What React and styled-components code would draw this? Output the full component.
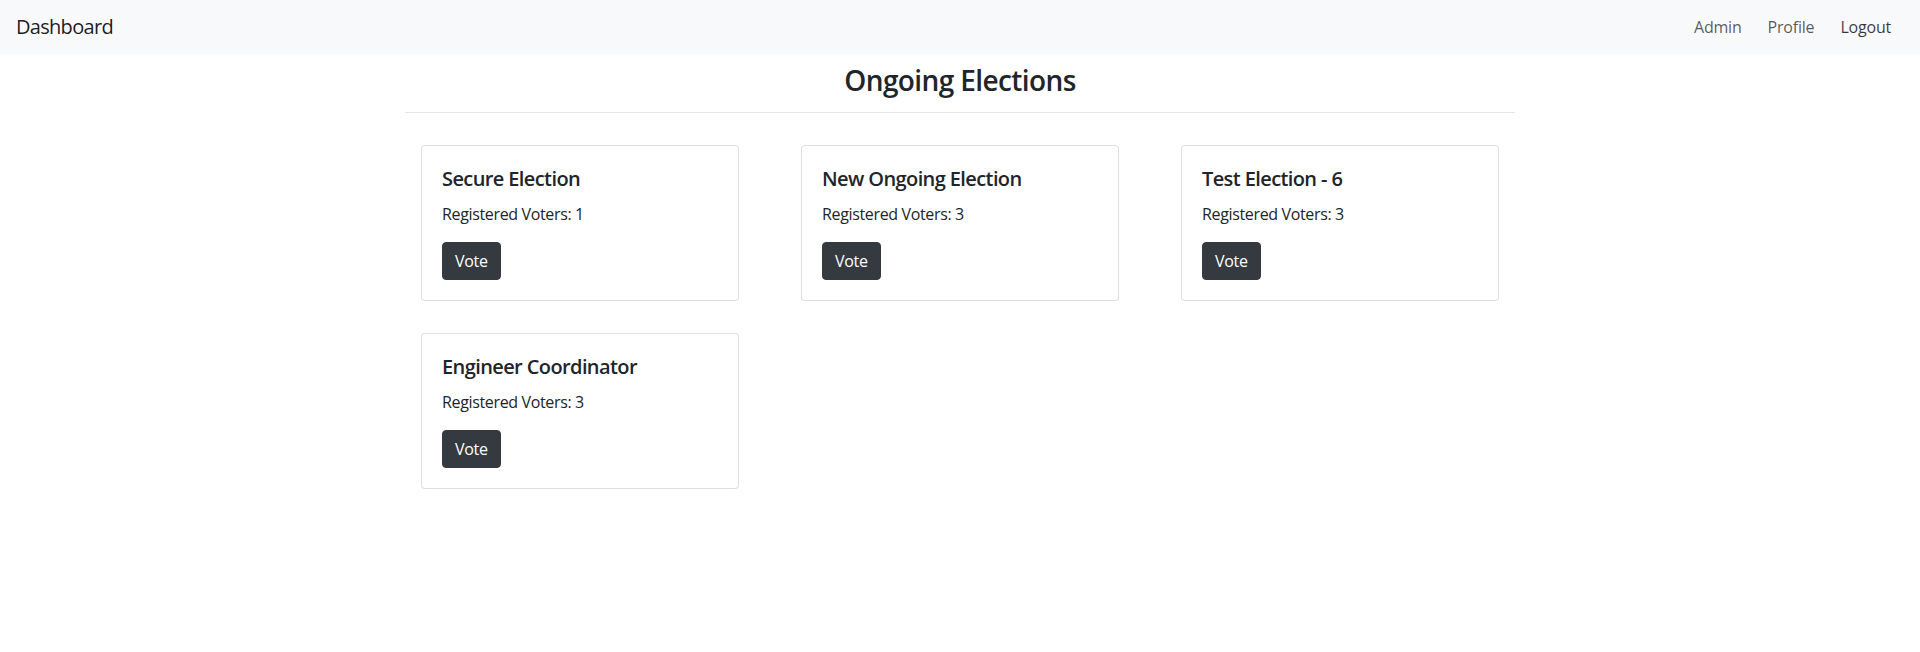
import React from "react";
import styled, { createGlobalStyle } from "styled-components";

const GlobalStyle = createGlobalStyle`
  * { box-sizing: border-box; }
  html, body { margin: 0; padding: 0; background: #fff; }
  body {
    font-family: "Open Sans", "Noto Sans", sans-serif;
    font-size: 16px;
    line-height: 1.5;
    color: #212529;
  }
`;

const Navbar = styled.nav`
  height: 54px;
  background: #f8f9fa;
  display: flex;
  align-items: center;
  justify-content: space-between;
  padding: 0 21px 0 16px;
`;

const Brand = styled.a`
  font-size: 20px;
  line-height: 30px;
  letter-spacing: -0.7px;
  color: rgba(0, 0, 0, 0.9);
  text-decoration: none;
`;

const NavList = styled.ul`
  display: flex;
  gap: 10px;
  list-style: none;
  margin: 0;
  padding: 0;
`;

const NavLink = styled.a`
  display: block;
  padding: 0 8px;
  font-size: 16px;
  line-height: 24px;
  letter-spacing: -0.2px;
  color: ${(p) => (p.$active ? "rgba(0,0,0,0.78)" : "rgba(0,0,0,0.66)")};
  text-decoration: none;
`;

const Container = styled.main`
  max-width: 1140px;
  margin: 0 auto;
  padding: 0 15px;
`;

const Title = styled.h2`
  margin: 9px 0 0;
  text-align: center;
  font-size: 28px;
  line-height: 34px;
  font-weight: 600;
  letter-spacing: -0.6px;
`;

const Divider = styled.hr`
  margin: 15px 0 16px;
  border: 0;
  border-top: 1px solid rgba(0, 0, 0, 0.1);
`;

const Grid = styled.div`
  display: grid;
  grid-template-columns: repeat(3, 1fr);
  margin: 0 -15px;
`;

const Col = styled.div`
  padding: 0 15px;
`;

const Card = styled.div`
  margin: 16px;
  border: 1px solid rgba(0, 0, 0, 0.125);
  border-radius: 4px;
  background: #fff;
  padding: 20px;
`;

const CardTitle = styled.h5`
  margin: 1px 0 11px;
  font-size: 20px;
  line-height: 24px;
  font-weight: 600;
  letter-spacing: -0.6px;
`;

const CardText = styled.p`
  margin: 0 0 16px;
  font-size: 16px;
  line-height: 24px;
  letter-spacing: -0.35px;
`;

const Button = styled.button`
  display: inline-block;
  font-family: inherit;
  font-size: 16px;
  line-height: 24px;
  letter-spacing: -0.3px;
  padding: 6px 12px;
  color: #fff;
  background: #343a40;
  border: 1px solid #343a40;
  border-radius: 4px;
  cursor: pointer;
`;

const elections = [
  { name: "Secure Election", voters: 1 },
  { name: "New Ongoing Election", voters: 3 },
  { name: "Test Election - 6", voters: 3 },
  { name: "Engineer Coordinator", voters: 3 },
];

export default function App() {
  return (
    <>
      <GlobalStyle />
      <Navbar>
        <Brand href="#">Dashboard</Brand>
        <NavList>
          <li><NavLink href="#">Admin</NavLink></li>
          <li><NavLink href="#">Profile</NavLink></li>
          <li><NavLink href="#" $active>Logout</NavLink></li>
        </NavList>
      </Navbar>
      <Container>
        <Title>Ongoing Elections</Title>
        <Divider />
        <Grid>
          {elections.map((e) => (
            <Col key={e.name}>
              <Card>
                <CardTitle>{e.name}</CardTitle>
                <CardText>Registered Voters: {e.voters}</CardText>
                <Button>Vote</Button>
              </Card>
            </Col>
          ))}
        </Grid>
      </Container>
    </>
  );
}
